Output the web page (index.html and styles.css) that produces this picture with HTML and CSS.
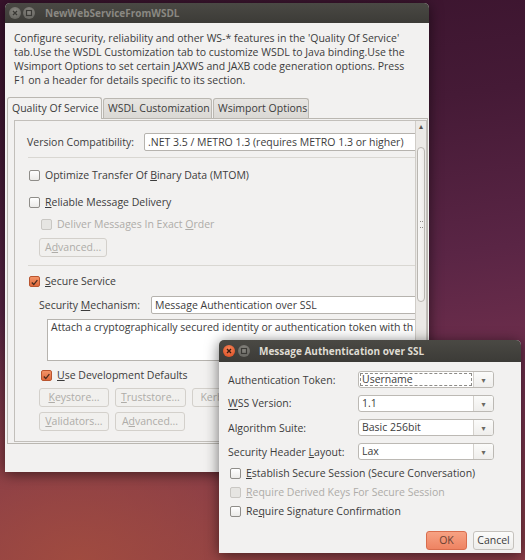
FILE: index.html
```html
<!DOCTYPE html>
<html lang="en">
<head>
  <meta charset="UTF-8" />
  <title>NewWebServiceFromWSDL</title>
  <link rel="stylesheet" href="styles.css">
</head>
<body>

<!-- Main wizard window (inactive) -->
<div class="win main-win">
  <div class="titlebar inactive">
    <span class="wbtn close"><svg width="12" height="12" viewBox="0 0 12 12"><path d="M4 4 L8 8 M8 4 L4 8" stroke="#3b3a36" stroke-width="1.4"/></svg></span>
    <span class="wbtn"><svg width="12" height="12" viewBox="0 0 12 12"><rect x="3.5" y="3.5" width="5" height="5" fill="none" stroke="#3b3a36" stroke-width="1.2"/></svg></span>
    <span class="title">NewWebServiceFromWSDL</span>
  </div>

  <div class="win-body">
    <p class="intro">Configure security, reliability and other WS-* features in the 'Quality Of Service'<br>tab.Use the WSDL Customization tab to customize WSDL to Java binding.Use the<br>Wsimport Options to set certain JAXWS and JAXB code generation options. Press<br>F1 on a header for details specific to its section.</p>

    <div class="tabs">
      <div class="tab active">Quality Of Service</div>
      <div class="tab t2">WSDL Customization</div>
      <div class="tab t3">Wsimport Options</div>
    </div>

    <div class="tab-panel">
      <div class="scroll">
        <div class="scroll-content">
          <div class="form-row">
            <span class="lbl lbl-version">Version Compatibility:</span>
            <span class="field">.NET 3.5 / METRO 1.3 (requires METRO 1.3 or higher)</span>
          </div>
          <div class="sep"></div>

          <label class="check first"><span class="cb"></span><span>Optimize Transfer Of <u>B</u>inary Data (MTOM)</span></label>
          <label class="check reliable"><span class="cb"></span><span><u>R</u>eliable Message Delivery</span></label>
          <label class="check sub disabled"><span class="cb"></span><span>Deliver Messages In Exact <u>O</u>rder</span></label>
          <div class="btn-row adv-row"><span class="btn disabled">A<u>d</u>vanced...</span></div>
          <div class="sep sep2"></div>

          <label class="check secure"><span class="cb checked"><svg width="11" height="11" viewBox="0 0 11 11"><path d="M2.2 5.6 L4.6 8 L9 2.6" fill="none" stroke="#4a2c20" stroke-width="1.6"/></svg></span><span><u>S</u>ecure Service</span></label>
          <div class="form-row mech">
            <span class="lbl lbl-mech">Security <u>M</u>echanism:</span>
            <span class="field">Message Authentication over SSL</span>
          </div>
          <div class="textarea">Attach a cryptographically secured identity or authentication token with th</div>
          <label class="check sub devdef"><span class="cb checked"><svg width="11" height="11" viewBox="0 0 11 11"><path d="M2.2 5.6 L4.6 8 L9 2.6" fill="none" stroke="#4a2c20" stroke-width="1.6"/></svg></span><span><u>U</u>se Development Defaults</span></label>
          <div class="btn-row">
            <span class="btn disabled"><u>K</u>eystore...</span>
            <span class="btn disabled"><u>T</u>ruststore...</span>
            <span class="btn disabled">Kerberos...</span>
          </div>
          <div class="btn-row">
            <span class="btn disabled"><u>V</u>alidators...</span>
            <span class="btn disabled">A<u>d</u>vanced...</span>
          </div>
        </div>
        <div class="vscroll">
          <div class="arrow">&#9652;</div>
          <div class="thumb"><span class="grip"></span></div>
        </div>
      </div>
    </div>
  </div>
</div>

<!-- Security mechanism dialog (active) -->
<div class="win dialog">
  <div class="titlebar">
    <span class="wbtn close active"><svg width="12" height="12" viewBox="0 0 12 12"><path d="M4 4 L8 8 M8 4 L4 8" stroke="#3a1a10" stroke-width="1.4"/></svg></span>
    <span class="wbtn gap3"><svg width="12" height="12" viewBox="0 0 12 12"><rect x="3.5" y="3.5" width="5" height="5" fill="none" stroke="#3b3a36" stroke-width="1.2"/></svg></span>
    <span class="title">Message Authentication over SSL</span>
  </div>

  <div class="win-body dlg-body">
    <div class="dlg-row">
      <span class="dlg-lbl">Authentication Token:</span>
      <span class="combo focused"><span class="combo-text">Username</span><span class="combo-arrow">&#9662;</span></span>
    </div>
    <div class="dlg-row">
      <span class="dlg-lbl lbl-wss">WSS Version:</span>
      <span class="combo"><span class="combo-text">1.1</span><span class="combo-arrow">&#9662;</span></span>
    </div>
    <div class="dlg-row">
      <span class="dlg-lbl">Algorithm Suite:</span>
      <span class="combo"><span class="combo-text">Basic 256bit</span><span class="combo-arrow">&#9662;</span></span>
    </div>
    <div class="dlg-row">
      <span class="dlg-lbl">Security Header <u>L</u>ayout:</span>
      <span class="combo"><span class="combo-text">Lax</span><span class="combo-arrow">&#9662;</span></span>
    </div>

    <label class="check dlg-check"><span class="cb"></span><span><u>E</u>stablish Secure Session (Secure Conversation)</span></label>
    <label class="check dlg-check disabled"><span class="cb"></span><span><u>R</u>equire Derived Keys For Secure Session</span></label>
    <label class="check dlg-check"><span class="cb"></span><span>Re<u>q</u>uire Signature Confirmation</span></label>

    <div class="dlg-buttons">
      <span class="btn ok">OK</span>
      <span class="btn">Cancel</span>
    </div>
  </div>
</div>

</body>
</html>
```

FILE: styles.css
```css
body {
  margin: 0;
  width: 525px; height: 560px;
  overflow: hidden;
  position: relative;
  font-family: "Open Sans", "DejaVu Sans", sans-serif;
  font-size: 10.5px;
  color: #3c3c3c;
  background:
    radial-gradient(ellipse 70% 45% at 15% 100%, rgba(165,78,62,0.85), rgba(165,78,62,0) 100%),
    linear-gradient(172deg, #38132c 0%, #451a36 25%, #5a2545 50%, #76324f 75%, #8a3d47 100%);
}
u { text-decoration: underline; text-underline-offset: 1px; }

/* windows */
.win {
  position: absolute;
  background: #f2f1f0;
  border-radius: 5px 5px 0 0;
  box-shadow: 0 2px 14px rgba(0,0,0,0.55);
}
.main-win { left: 5px; top: 3px; width: 424px; height: 469px; }
.dialog { left: 219px; top: 340px; width: 302px; height: 213px; }

.titlebar {
  height: 20px;
  display: flex; align-items: center;
  padding-left: 4px;
  border-radius: 5px 5px 0 0;
  background: linear-gradient(#4a4944, #3c3b37);
  color: #dfdbd2;
  font-weight: bold; font-size: 10px;
}
.dialog .titlebar { height: 22px; }
.titlebar.inactive { color: #8a8882; }
.title { margin-left: 8px; }
.dialog .title { margin-left: 7px; }

.wbtn {
  width: 12px; height: 12px; border-radius: 50%;
  margin-right: 2px;
  background: radial-gradient(circle at 50% 35%, #8b8983, #5e5d58);
  display: flex;
}
.wbtn.gap3 { margin-left: 1px; }
.wbtn.close.active { background: radial-gradient(circle at 50% 35%, #f7875a, #d9471d); }

/* intro text */
.intro {
  margin: 8px 0 0 9px;
  line-height: 14px;
  white-space: nowrap;
}

/* tabs */
.tabs {
  display: flex; align-items: flex-end;
  margin: 10px 0 0 2px;
  height: 21px;
  position: relative; z-index: 1;
}
.tab {
  height: 19px; line-height: 19px;
  padding: 0 4px;
  border: 1px solid #bab7b1; border-bottom: none;
  border-radius: 3px 3px 0 0;
  background: linear-gradient(#e7e5e2, #dad8d4);
  margin-right: 1px;
  white-space: nowrap;
}
.tab.active {
  height: 21px; line-height: 20px;
  background: #f2f1f0;
  margin-bottom: -1px;
}
.tab:first-child { width: 85px; }
.tab.t2 { width: 99px; }
.tab.t3 { width: 86px; }

.tab-panel {
  margin-left: 2px;
  border: 1px solid #bab7b1;
  padding: 1px 0 0 6px;
  box-sizing: border-box;
  width: 421px; height: 326px;
}

.scroll {
  display: flex;
  width: 413px; height: 322px;
  border: 1px solid #c2bfba;
  box-sizing: border-box;
}
.scroll-content {
  flex: 1; min-width: 0;
  overflow: hidden;
  padding: 12px 0 0 12px;
}
.vscroll {
  width: 10px;
  border-left: 1px solid #d0cdc8;
  background: #ebe9e6;
  display: flex; flex-direction: column; align-items: center;
}
.arrow { font-size: 8px; line-height: 10px; height: 11px; color: #55534f; }
.thumb {
  margin-top: 15px;
  width: 8px; height: 155px;
  border: 1px solid #b9b6b1; border-radius: 5px;
  background: linear-gradient(90deg, #f8f7f6, #eeecea);
  box-sizing: border-box;
  display: flex; align-items: center; justify-content: center;
}
.grip { width: 3px; height: 5px; border-top: 1px dotted #8c8a86; border-bottom: 1px dotted #8c8a86; }

/* form bits */
.form-row { display: flex; align-items: center; height: 18px; white-space: nowrap; }
.lbl-version { width: 117px; flex: none; }
.field {
  flex: none;
  width: 300px; height: 18px; line-height: 16px;
  padding-left: 3px;
  border: 1px solid #b6b3ae; border-radius: 2px;
  background: #fff;
  box-sizing: border-box;
  overflow: hidden;
}
.sep { height: 1px; background: #d9d7d2; margin: 6px 0 0 1px; }
.sep2 { margin-top: 8px; }

.check {
  display: flex; align-items: center;
  height: 18px;
  white-space: nowrap;
  margin-left: 2px;
}
.cb {
  width: 11px; height: 11px; flex: none;
  box-sizing: border-box;
  border: 1px solid #8f8d89; border-radius: 2px;
  background: linear-gradient(#ffffff, #ebeae8);
  margin-right: 5px;
  display: flex;
}
.cb.checked { background: linear-gradient(#f39367, #e06a3c); border-color: #b9552f; }
.check.disabled { color: #aeaca8; }
.check.disabled .cb { border-color: #c9c7c3; background: #e6e5e2; }
.check.first { margin-top: 8px; }
.check.reliable { margin-top: 9px; }
.check.sub { margin-left: 14px; margin-top: 4px; }
.check.secure { margin-top: 6px; }

.mech { margin-top: 6px; margin-left: 12px; }
.lbl-mech { width: 112px; flex: none; }
.textarea {
  margin: 5px 0 0 20px;
  height: 42px;
  border: 1px solid #b6b3ae;
  background: #fff;
  padding: 0 3px;
  line-height: 14px;
  white-space: nowrap; overflow: hidden;
  box-sizing: border-box;
  width: 400px;
}
.check.devdef { margin-top: 5px; }

.btn-row { display: flex; gap: 6px; margin: 4px 0 0 12px; }
.btn-row + .btn-row { margin-top: 5px; }
.adv-row { margin-top: 5px; }
.btn {
  height: 19px; line-height: 17px;
  min-width: 70px;
  padding: 0 5px;
  box-sizing: border-box;
  text-align: center;
  border: 1px solid #c5c2bd; border-radius: 3px;
  background: linear-gradient(#fbfbfa, #eeedeb);
  white-space: nowrap;
}
.btn.disabled { color: #aeaca8; border-color: #d3d0cb; background: #f1f0ee; }
.adv-row .btn { min-width: 66px; }

/* dialog */
.dlg-body { padding: 9px 27px 0 9px; }
.dlg-row { display: flex; align-items: center; height: 17px; margin-bottom: 7px; white-space: nowrap; }
.dlg-lbl { width: 130px; flex: none; }
/* mnemonic underline under the W only, kept off the text node */
.lbl-wss {
  line-height: 15px;
  background: linear-gradient(#3c3c3c, #3c3c3c) no-repeat 0 13px / 10px 1px;
}
.combo {
  display: flex; width: 136px; height: 17px;
  border: 1px solid #bcb9b4; border-radius: 3px;
  box-sizing: border-box;
  background: #fff;
  overflow: hidden;
}
.combo-text { flex: 1; line-height: 15px; padding-left: 3px; }
.combo.focused .combo-text { outline: 1px dashed #8d8b87; outline-offset: -2px; }
.combo-arrow {
  width: 19px; flex: none;
  border-left: 1px solid #d4d1cc;
  background: linear-gradient(#fbfbfa, #efeeec);
  text-align: center; line-height: 15px;
  font-size: 8px; color: #6a6863;
}
.dlg-check { margin-top: 0; margin-bottom: 1px; }
.dlg-row:nth-child(4) { margin-bottom: 4px; }
.dlg-buttons { display: flex; justify-content: flex-end; gap: 6px; margin: 11px -20px 0 0; }
.dlg-buttons .btn { min-width: 41px; width: 41px; padding: 0; }
.btn.ok { background: linear-gradient(#f7a283, #ee8362); border-color: #d96d4d; color: #6b4234; }
```
